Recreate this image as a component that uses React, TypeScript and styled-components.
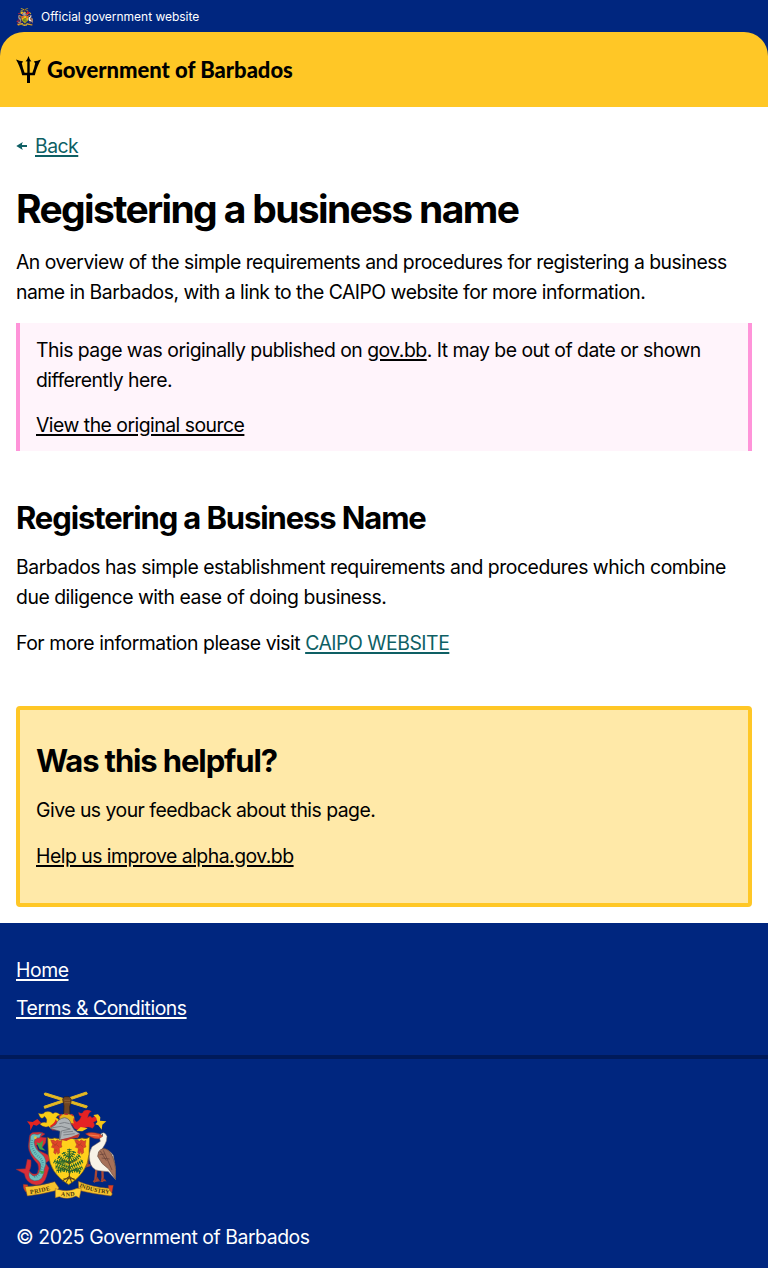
import React from "react";
import styled, { createGlobalStyle } from "styled-components";

const GlobalStyle = createGlobalStyle`
  *, *::before, *::after { box-sizing: border-box; }
  body {
    margin: 0;
    background: #fff;
    color: #000;
    font: 400 19.4px/30px Inter, "Liberation Sans", sans-serif;
    letter-spacing: -0.51px;
  }
  h1, h2, p { margin: 0; }
`;

const TopBanner = styled.div`
  background: #00267f;
`;

const OfficialBar = styled.div`
  display: flex;
  align-items: center;
  gap: 8px;
  height: 32px;
  padding: 1px 16px 0;
  color: #fff;
  font-size: 12px;
  letter-spacing: -0.02px;
`;

const Header = styled.header`
  display: flex;
  align-items: center;
  gap: 6px;
  height: 75px;
  padding: 0 16px;
  background: #ffc726;
  border-radius: 24px 24px 0 0;
`;

const Wordmark = styled.span`
  font: 900 22px/1 Lato, sans-serif;
  letter-spacing: -0.02px;
`;

const Main = styled.main`
  display: flex;
  flex-direction: column;
  padding: 24px 16px 16px;
`;

const Link = styled.a<{ $color?: string }>`
  color: ${(p) => p.$color ?? "inherit"};
  text-decoration: underline;
  text-decoration-thickness: 2px;
  text-underline-offset: 2px;
`;

const BackRow = styled.nav`
  display: flex;
  align-items: center;
  gap: 8px;
  margin-bottom: 24px;
`;

const PageTitle = styled.h1`
  padding-top: 1px;
  font-size: 39px;
  font-weight: 700;
  line-height: 45px;
  letter-spacing: -1.65px;
`;

const SectionTitle = styled.h2`
  padding-top: 1px;
  font-size: 31px;
  font-weight: 700;
  line-height: 35.8px;
  letter-spacing: -1.12px;
`;

const Stack = styled.div<{ $gap?: number }>`
  display: flex;
  flex-direction: column;
  align-items: flex-start;
  gap: ${(p) => p.$gap ?? 16}px;
`;

const Callout = styled.aside`
  display: flex;
  flex-direction: column;
  align-items: flex-start;
  gap: 15px;
  height: 128px;
  margin-top: 16px;
  padding: 12px 16px;
  background: #fff4fb;
  border: solid #ff94d9;
  border-width: 0 4px;
`;

const Article = styled(Stack)`
  margin: 48px 0;
  letter-spacing: -0.47px;
`;

const Feedback = styled(Stack)`
  padding: 32px 16px;
  background: #ffe9a8;
  border: 4px solid #ffc726;
  border-radius: 4px;
`;

const Footer = styled.footer`
  background: #00267f;
  color: #fff;
  letter-spacing: -0.45px;
`;

const FooterLinks = styled(Stack)`
  padding: 32px 16px;
  border-bottom: 4px solid #001a5a;
`;

const FooterBrand = styled.div`
  display: flex;
  flex-direction: column;
  gap: 23px;
  height: 209px;
  padding: 32px 16px 0;
`;

const Trident = () => (
  <svg width="25" height="27" viewBox="0 0 25 27" aria-hidden="true">
    <path d="M12.5 0 Q13.5 3.4 15.4 5.6 L13.7 5.2 V16.8 H16.4 C17.6 13.6 18.6 10.3 19.2 7.2 L17.8 5.4 C20.4 5.1 23 4.5 25 3.6 C22.6 7.6 20.4 12.8 18.8 19.3 H14 V27 H11 V19.3 H6.2 C4.6 12.8 2.4 7.6 0 3.6 C2 4.5 4.6 5.1 7.2 5.4 L5.8 7.2 C6.4 10.3 7.4 13.6 8.6 16.8 H11.3 V5.2 L9.6 5.6 Q11.5 3.4 12.5 0 Z" />
  </svg>
);

const Arrow = () => (
  <svg width="11" height="10" viewBox="0 0 11 10" aria-hidden="true">
    <path d="M.3 5 L6.8 1 Q5.9 2.8 5.9 4 H11 V6 H5.9 Q5.9 7.2 6.8 9Z" fill="#0e5f64" />
  </svg>
);

const leafSprays = [
  "M208 272 Q190 270 166 258",
  "M208 274 Q232 270 247 262",
  "M207 262 Q184 255 162 243",
  "M209 262 Q230 254 249 242",
  "M207 246 Q188 243 174 229",
  "M209 246 Q226 240 239 226",
  "M207 232 Q195 229 190 216",
  "M209 232 Q219 227 222 213",
  "M208 230 V206",
  "M190 268 Q178 272 170 272",
  "M226 268 Q236 275 242 275",
  "M194 246 Q182 244 168 247",
];

const Crest = ({ width, height }: { width: number; height: number }) => (
  <svg width={width} height={height} viewBox="48 33 300 324" preserveAspectRatio="none" role="img" aria-label="Coat of arms of Barbados">
    <path d="M133 40 L137 39 L262 78 L259 84 L134 45Z M259 36 L262 42 L134 85 L132 79Z" fill="#e7bb22" strokeWidth="3" stroke="#e0b425" />
    <path d="M188 58 L193 50 L207 50 L214 58 L212 72 L209 80 L210 106 L191 106 L192 78Z" fill="#704522" stroke="#2b1c1b" strokeWidth="2" />
    <path d="M193 61 H210 M194 68 H211" stroke="#a77945" strokeWidth="1.5" />
    {/* mantling */}
    <path d="M177 145 Q155 153 146 139 Q132 145 119 132 Q128 125 139 128 Q144 117 133 109 Q126 121 119 109 L115 100 Q130 105 135 96 Q149 91 159 101 Q169 92 181 105 Q171 106 168 113 Q182 118 178 133Z" fill="#f8cd16" stroke="#8b541d" strokeWidth="1" />
    <path d="M81 124 L98 126 L112 117 L123 128 L110 137 L100 134 L91 152 L90 136Z M150 138 Q164 130 167 118 L176 131 L175 151 L156 151Z" fill="#e32420" />
    <path d="M223 145 Q210 128 214 112 L230 126 Q240 122 244 108 Q236 109 236 97 Q248 104 251 93 Q262 87 274 94 Q265 99 263 113 Q271 104 276 114 L287 107 L295 119 L280 127 Q288 137 277 145 Q265 138 256 143 Q241 157 223 145Z" fill="#e52224" stroke="#a92330" strokeWidth="1" />
    <path d="M280 105 L294 103 L301 112 L300 122 L319 124 L307 134 L305 149 L295 136 L286 133 L292 126 L289 114Z M229 153 L242 141 L263 145 L247 154Z" fill="#f7c616" />
    <path d="M178 110 Q184 99 200 103 Q217 101 223 111 L220 132 L180 129Z" fill="#e9b618" stroke="#c7342a" strokeWidth="4" strokeDasharray="10 8" />
    {/* supporters */}
    <path d="M88 172 Q89 156 108 157 Q125 154 135 162 L122 171 L139 173 L137 188 L125 205 L118 192 L109 196 L115 211 L143 224 L151 239 L137 249 L147 264 L140 288 Q132 317 108 315 Q77 310 73 281 L48 268 L76 266 L82 238 L93 240 Q95 261 88 272 Q96 286 111 281 Q119 265 113 252 Q86 224 85 199Z" fill="#d92d37" stroke="#78313c" strokeWidth="1.5" />
    <path d="M91 178 Q90 157 112 164 L125 160 L118 174 Q104 171 102 187 Q105 209 124 221 Q146 239 132 268 Q131 305 103 302 Q82 298 88 277 Q104 300 117 278 Q128 257 117 244 Q86 220 89 192Z" fill="#6fc0bd" stroke="#316e7c" strokeWidth="1.5" />
    <path d="M96 180 Q90 205 114 228 Q135 244 124 268 Q118 292 99 291" fill="none" stroke="#28798c" strokeWidth="7" strokeDasharray="1.5 5" />
    <path d="M109 187 L119 190 L130 180 L126 201 L137 212 L119 208Z M115 270 L134 275 L126 283Z" fill="#43a147" />
    <circle cx="106" cy="173" r="4" fill="#e5c639" />
    <path d="M289 268 L286 301 L281 306 M307 266 L308 291 L306 306 M271 255 L262 258 V235" fill="none" stroke="#a94734" strokeWidth="7" />
    <path d="M283 307 L291 292 L299 304 M302 304 L313 297 L318 304" fill="#ad4730" stroke="#943e2e" strokeWidth="3" />
    <path d="M297 166 Q313 149 321 169 Q321 183 315 193 L306 208 Q325 204 340 226 L347 266 L347 299 L325 275 L296 272 Q273 269 269 241 Q264 220 276 200 L301 184 L299 176Z" fill="#f7f3e7" stroke="#79655b" strokeWidth="1.5" />
    <path d="M296 215 Q308 199 325 211 Q343 228 347 269 L347 298 L326 267 L306 250 L293 229Z" fill="#a67158" stroke="#624638" strokeWidth="2" />
    <path d="M301 213 L319 242 M310 211 L336 270 M299 224 L315 222 M305 234 L329 237" stroke="#653f36" strokeWidth="2" />
    <path d="M257 161 Q273 153 300 162 L308 169 L297 176 Q282 179 257 162Z" fill="#df4c30" stroke="#922e28" strokeWidth="1.5" />
    <path d="M266 165 L297 168" stroke="#f8a062" strokeWidth="2" />
    <circle cx="307" cy="165" r="2" fill="#111" />
    {/* shield */}
    <path d="M143 172 Q152 180 163 174 Q186 181 206 173 Q229 182 246 174 Q260 179 269 171 L267 223 Q262 281 206 314 Q150 281 145 223Z" fill="#ffd11c" stroke="#735716" strokeWidth="2" />
    {/* helm */}
    <path d="M150 145 L168 133 Q173 116 194 113 Q211 116 213 133 L222 149 L239 161 L235 171 L220 174 L199 177 L178 180 L180 154Z" fill="#aeb3b6" stroke="#565a60" strokeWidth="2" />
    <path d="M152 144 L184 139 L211 147 L184 153 L181 176 M178 131 Q193 124 209 131 M190 157 L219 154 M190 165 L224 161" fill="none" stroke="#73787d" strokeWidth="2.5" />
    <path d="M181 179 Q212 173 238 161 L234 173 Q212 174 199 183Z" fill="#bf352d" />
    {[167, 239].map((x) => (
      <g key={x} fill="#e0442a" stroke="#8f361e" strokeWidth="1">
        <path d={`M${x - 15} 181 l9 -1 l5 4 l5 -5 l9 5 l6 -3 l-2 12 l2 8 l-8 3 l1 14 l-6 5 l-2 -9 l-4 9 l-6 -5 l2 -13 l-9 -3 l4 -8Z`} />
        <path d={`M${x - 9} 187 l7 8 l8 -7 M${x - 6} 199 l8 -5 l8 6 M${x - 3} 210 h7`} fill="none" stroke="#b5441f" strokeWidth="2.5" />
      </g>
    ))}
    <path d="M208 215 V293 M208 274 L188 262 M208 276 L232 264 M208 250 L185 240 M208 250 L232 238 M207 290 L186 304 M208 290 L198 308 M209 290 L215 308 M209 290 L227 302 M208 296 L190 297 M208 296 L224 297" fill="none" stroke="#53391a" strokeWidth="3" />
    <g fill="none" stroke="#24662f" strokeLinecap="butt">
      {leafSprays.map((d) => (
        <React.Fragment key={d}>
          <path d={d} strokeWidth="3" />
          <path d={d} strokeWidth="13" strokeDasharray="3 3.5" />
        </React.Fragment>
      ))}
    </g>
    {/* ribbon */}
    <path d="M70 313 L83 314 L86 331 L77 336 Q68 325 70 313 M326 331 L325 316 L340 316 L335 342Z" fill="#df3e27" stroke="#814018" />
    <path d="M75 320 Q122 318 164 305 L177 324 L171 331 Q126 343 82 348Z M235 304 Q277 322 326 325 L337 342 L333 348 Q279 342 236 331Z" fill="#f6c32d" stroke="#87511e" strokeWidth="1.5" />
    <path d="M166 326 L177 329 Q207 337 231 325 L244 326 L238 354 L228 348 Q204 361 178 350 L166 353Z" fill="#ffd033" stroke="#986323" strokeWidth="1.5" />
    <defs>
      <path id="ribbon-left" d="M91 342 Q130 337 164 325" />
      <path id="ribbon-mid" d="M182 348 Q205 351 229 346" />
      <path id="ribbon-right" d="M237 321 Q276 337 333 342" />
    </defs>
    <g fontFamily="Liberation Serif, serif" fontWeight="700" fontSize="18" fill="#49330f" letterSpacing="0">
      <text><textPath href="#ribbon-left" textLength="61">PRIDE</textPath></text>
      <text><textPath href="#ribbon-mid" textLength="43">AND</textPath></text>
      <text><textPath href="#ribbon-right" textLength="94">INDUSTRY</textPath></text>
    </g>
  </svg>
);

export default function App() {
  return (
    <>
      <GlobalStyle />
      <TopBanner>
        <OfficialBar>
          <Crest width={17} height={18} />
          <span>Official government website</span>
        </OfficialBar>
        <Header>
          <Trident />
          <Wordmark>Government of Barbados</Wordmark>
        </Header>
      </TopBanner>
      <Main>
        <BackRow>
          <Arrow />
          <Link href="#" $color="#0e5f64">Back</Link>
        </BackRow>
        <Stack>
          <PageTitle>Registering a business name</PageTitle>
          <p>
            An overview of the simple requirements and procedures for registering a business name in Barbados, with a
            link to the CAIPO website for more information.
          </p>
        </Stack>
        <Callout>
          <p>
            This page was originally published on <Link href="#">gov.bb</Link>. It may be out of date or shown
            differently here.
          </p>
          <Link href="#">View the original source</Link>
        </Callout>
        <Article>
          <SectionTitle>Registering a Business Name</SectionTitle>
          <p>
            Barbados has simple establishment requirements and procedures which combine due diligence with ease of
            doing business.
          </p>
          <p>
            For more information please visit <Link href="#" $color="#0e5f64">CAIPO WEBSITE</Link>
          </p>
        </Article>
        <Feedback>
          <SectionTitle>Was this helpful?</SectionTitle>
          <p>Give us your feedback about this page.</p>
          <Link href="#">Help us improve alpha.gov.bb</Link>
        </Feedback>
      </Main>
      <Footer>
        <FooterLinks $gap={8}>
          <Link href="#">Home</Link>
          <Link href="#">Terms &amp; Conditions</Link>
        </FooterLinks>
        <FooterBrand>
          <Crest width={100} height={108} />
          <p>© 2025 Government of Barbados</p>
        </FooterBrand>
      </Footer>
    </>
  );
}
